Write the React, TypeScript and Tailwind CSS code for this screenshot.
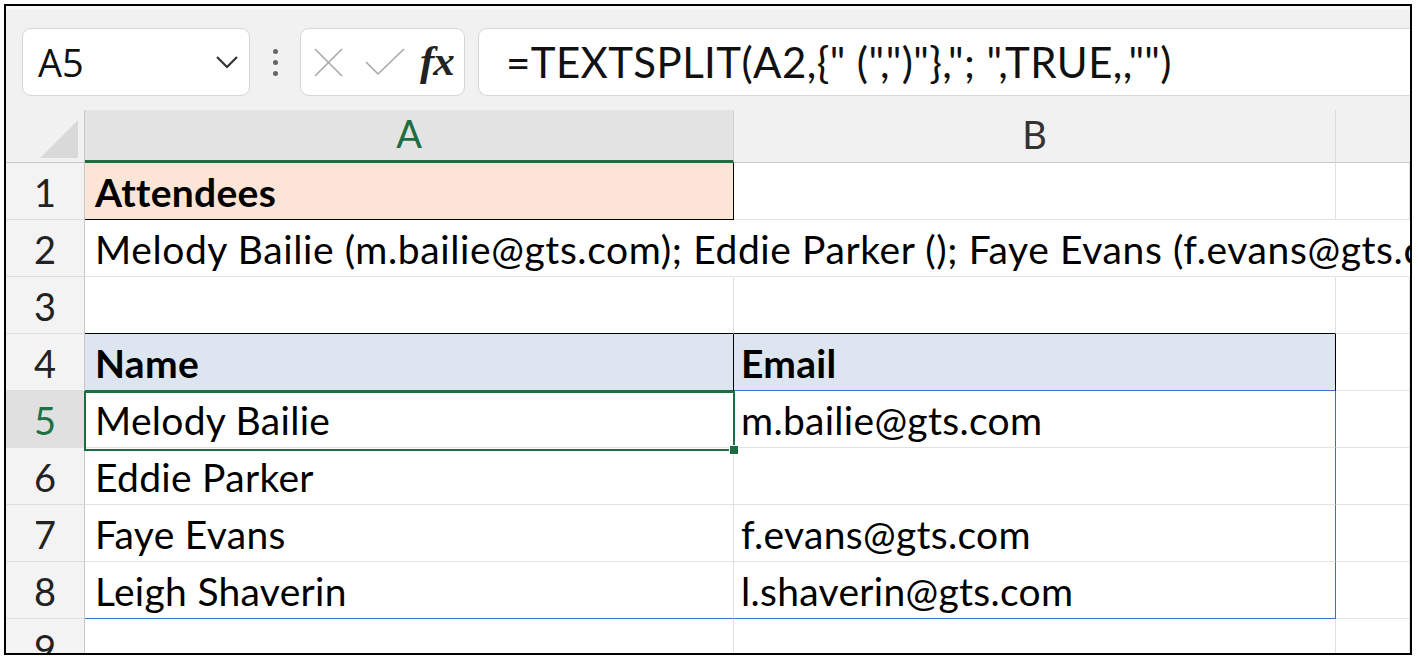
import React from "react";

const cellFont = { fontFamily: "Lato, 'Noto Sans', sans-serif" };

function Cell({
  children,
  className = "",
}: {
  children?: React.ReactNode;
  className?: string;
}) {
  return (
    <div
      className={
        "flex items-end pb-[7px] border-r border-b text-[39px] leading-none text-black whitespace-nowrap " +
        className
      }
    >
      {children}
    </div>
  );
}

function RowHead({ n, active = false }: { n: number; active?: boolean }) {
  return (
    <div
      className={
        "flex items-end justify-center pb-[8px] border-r border-r-[#c8c8c8] border-b border-b-[#dedede] text-[38px] leading-none " +
        (active ? "bg-[#e0e0e0] text-[#1e7145]" : "bg-[#f3f3f3] text-[#222]")
      }
    >
      {n}
    </div>
  );
}

export default function App() {
  const g = "border-r-[#e1e1e1] border-b-[#e1e1e1]";
  const a = "pl-[10px] tracking-[0.3px] ";
  const b = "pl-[7px] tracking-[0.3px] ";
  return (
    <div className="w-[1418px] h-[663px] bg-white overflow-hidden" style={cellFont}>
      <div className="ml-[4px] mt-[4px] w-[1408px] h-[651px] border-2 border-black overflow-hidden relative bg-white">
        {/* Toolbar */}
        <div className="h-[104px] bg-[#f1f1f1] flex items-start pt-[18px] pl-[16px] border-t-[4px] border-t-[#f7f7f7]">
          <div className="w-[228px] h-[68px] bg-white border border-[#d6d6d6] rounded-[9px] flex items-center justify-between pl-[15px] pr-[10px]">
            <span className="text-[38px] text-[#111] leading-none" style={{ fontFamily: "'Open Sans', sans-serif" }}>
              A5
            </span>
            <svg width="24" height="14" viewBox="0 0 24 14">
              <path d="M2 2 L12 12 L22 2" fill="none" stroke="#333" strokeWidth="2.2" />
            </svg>
          </div>
          <div className="w-[50px] h-[68px] flex flex-col items-center justify-center gap-[6px]">
            <div className="w-[5px] h-[5px] rounded-full bg-[#666]" />
            <div className="w-[5px] h-[5px] rounded-full bg-[#666]" />
            <div className="w-[5px] h-[5px] rounded-full bg-[#666]" />
          </div>
          <div className="w-[165px] h-[68px] bg-white border border-[#d6d6d6] rounded-[9px] flex items-center pl-[12px]">
            <svg width="31" height="31" viewBox="0 0 31 31">
              <path d="M2 2 L29 29 M29 2 L2 29" stroke="#a8a8a8" strokeWidth="1.6" fill="none" />
            </svg>
            <svg width="40" height="28" viewBox="0 0 40 28" className="ml-[21px]">
              <path d="M1 14 L13 26 L39 1" stroke="#a8a8a8" strokeWidth="1.6" fill="none" />
            </svg>
            <span
              className="ml-[15px] text-[43px] italic font-bold leading-none text-[#222] -mt-[4px] tracking-[-1px]"
              style={{ fontFamily: "'Liberation Serif', 'DejaVu Serif', serif" }}
            >
              fx
            </span>
          </div>
          <div className="ml-[13px] flex-1 h-[68px] bg-white border border-r-0 border-[#d6d6d6] rounded-l-[9px] flex items-center pl-[27px]">
            <span className="text-[42px] tracking-[0.4px] leading-none text-[#111] whitespace-nowrap">
              =TEXTSPLIT(A2,{"{"}" (",")"{"}"},"; ",TRUE,,"")
            </span>
          </div>
        </div>

        {/* Grid */}
        <div className="grid grid-cols-[79px_649px_602px_1fr] grid-rows-[53px_repeat(9,57px)]">
          {/* header row */}
          <div className="bg-[#f1f1f1] border-r border-r-[#c8c8c8] border-b border-b-[#c8c8c8] relative">
            <svg width="38" height="38" viewBox="0 0 38 38" className="absolute left-[34px] top-[10px]">
              <polygon points="38,0 38,38 0,38" fill="#d9d9d9" />
            </svg>
          </div>
          <div className="bg-[#e3e3e3] border-r border-r-[#d0d0d0] border-b-[3px] border-b-[#1e6c41] flex items-end justify-center pb-[8px] text-[38px] leading-none text-[#1e6c41]">
            A
          </div>
          <div className="bg-[#f1f1f1] border-r border-r-[#dadada] border-b border-b-[#c8c8c8] flex items-end justify-center pb-[9px] text-[38px] leading-none text-[#333]">
            B
          </div>
          <div className="bg-[#f1f1f1] border-b border-b-[#c8c8c8]" />

          {/* row 1 */}
          <RowHead n={1} />
          <Cell className={a + "bg-[#fce4d6] border-r-black border-b-black font-bold"}>Attendees</Cell>
          <Cell className={b + g} />
          <Cell className={b + g} />

          {/* row 2 */}
          <RowHead n={2} />
          <Cell className="pl-[10px] tracking-[0.6px] border-r-transparent border-b-[#e1e1e1] relative z-10">
            Melody Bailie (m.bailie@gts.com); Eddie Parker (); Faye Evans (f.evans@gts.com); Leigh Shaverin (l.shaverin@gts.com)
          </Cell>
          <Cell className={b + "border-r-transparent border-b-[#e1e1e1]"} />
          <Cell className={b + "border-r-transparent border-b-[#e1e1e1]"} />

          {/* row 3 */}
          <RowHead n={3} />
          <Cell className={a + "border-r-[#e1e1e1] border-b-black"} />
          <Cell className={b + "border-r-[#e1e1e1] border-b-black"} />
          <Cell className={b + g} />

          {/* row 4 */}
          <RowHead n={4} />
          <Cell className={a + "bg-[#dde6f0] border-r-black border-b-[#1e6c41] font-bold"}>Name</Cell>
          <Cell className={b + "bg-[#dde6f0] border-r-black border-b-[#3f6fc6] font-bold"}>Email</Cell>
          <Cell className={b + g} />

          {/* row 5 */}
          <RowHead n={5} active />
          <Cell className={a + g}>Melody Bailie</Cell>
          <Cell className={b + "border-r-[#3f6fc6] border-b-[#e1e1e1]"}>m.bailie@gts.com</Cell>
          <Cell className={b + g} />

          {/* row 6 */}
          <RowHead n={6} />
          <Cell className={a + g}>Eddie Parker</Cell>
          <Cell className={b + "border-r-[#3f6fc6] border-b-[#e1e1e1]"} />
          <Cell className={b + g} />

          {/* row 7 */}
          <RowHead n={7} />
          <Cell className={a + g}>Faye Evans</Cell>
          <Cell className={b + "border-r-[#3f6fc6] border-b-[#e1e1e1]"}>f.evans@gts.com</Cell>
          <Cell className={b + g} />

          {/* row 8 */}
          <RowHead n={8} />
          <Cell className={a + "border-r-[#e1e1e1] border-b-[#3f6fc6]"}>Leigh Shaverin</Cell>
          <Cell className={b + "border-r-[#3f6fc6] border-b-[#3f6fc6]"}>l.shaverin@gts.com</Cell>
          <Cell className={b + g} />

          {/* row 9 */}
          <RowHead n={9} />
          <Cell className={a + g} />
          <Cell className={b + g} />
          <Cell className={b + g} />
        </div>

        {/* selection overlay for A5 */}
        <div className="absolute left-[78px] top-[385px] w-[651px] h-[60px] border-2 border-[#1e6c41] pointer-events-none" />
        <div className="absolute left-[724px] top-[440px] w-[8px] h-[8px] bg-[#1e6c41] outline outline-1 outline-white" />
      </div>
    </div>
  );
}
